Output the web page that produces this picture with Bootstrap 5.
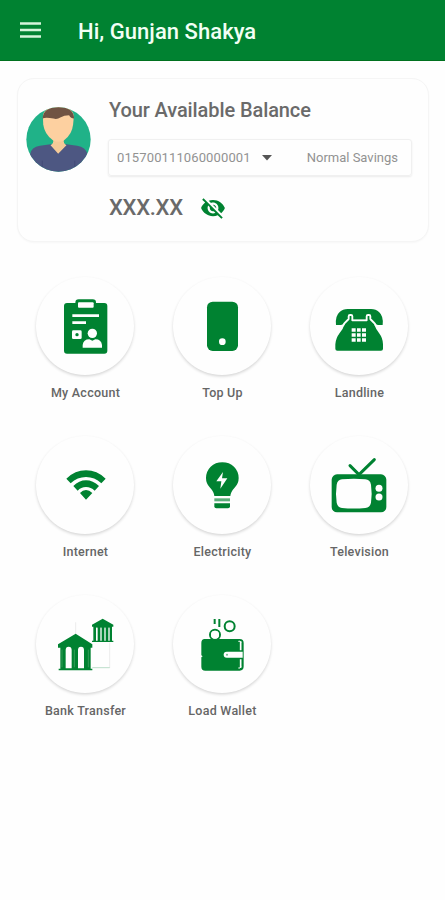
<!DOCTYPE html>
<html lang="en">
<head>
<meta charset="utf-8">
<meta name="viewport" content="width=device-width, initial-scale=1">
<title>Mobile Banking</title>
<link href="https://cdn.jsdelivr.net/npm/bootstrap@5.3.0/dist/css/bootstrap.min.css" rel="stylesheet">
<style>
:root { --brand: #008231; }
body { font-family: Roboto, "Liberation Sans", sans-serif; background: #fefefe; color: #666; }
.topbar { background: var(--brand); height: 61px; border-bottom: 1px solid #00711f; padding: 0 19px; }
.topbar h1 { font-size: 22px; font-weight: 500; line-height: 26px; margin: 3px 0 0 35px; letter-spacing: .04px; color: #f2fff5; }
.balance { margin: 17px 16px 0 17px; height: 164px; border: 1px solid #f5f5f5; border-radius: 17px; background: #fefefe; box-shadow: 0 1px 2px rgba(0,0,0,.03); padding: 17px 16px 0 8px; }
.avatar { width: 65px; height: 65px; margin-top: 11px; }
.details { margin-left: 17px; }
.balance h2 { font-size: 20px; font-weight: 500; line-height: 28px; margin: 0 0 15px 1px; letter-spacing: -.1px; color: #6a6a6a; }
.account { height: 37px; border: 1px solid #f0f0f0; border-radius: 3px; box-shadow: 0 1px 2px rgba(0,0,0,.08); font-size: 13px; color: #929292; padding: 0 13px 0 8px; }
.account .number { letter-spacing: .12px; }
.money { margin-top: 18px; }
.amount { font-size: 22px; font-weight: 500; line-height: 28px; color: #6a6a6a; margin-left: 1px; letter-spacing: -.3px; }
.hide-eye { margin-left: 17px; }
.services { padding: 35px 17px 0; }
.services .tile { height: 159px; }
.disc { width: 98px; height: 98px; background: #fefefe; box-shadow: 0 1.5px 3px rgba(0,0,0,.16); }
.disc svg { display: block; width: 98px; height: 98px; }
.tile-label { font-size: 12.5px; font-weight: 500; line-height: 16px; margin-top: 10px; letter-spacing: .25px; }
.g { fill: var(--brand); }
.w { fill: #fefefe; }
.s { fill: none; stroke: var(--brand); }
</style>
<script src="https://cdn.jsdelivr.net/npm/bootstrap@5.3.0/dist/js/bootstrap.bundle.min.js"></script>
</head>
<body>
<header class="topbar d-flex align-items-center">
  <svg width="24" height="24" viewBox="0 0 24 24"><path d="M1 5.500h21M1 12h21M1 18.500h21" stroke="#d5f5da" stroke-width="2.300"/></svg>
  <h1>Hi, Gunjan Shakya</h1>
</header>
<main>
  <section class="balance d-flex">
    <svg class="avatar flex-shrink-0" viewBox="32 35 196 196">
      <clipPath id="face"><circle cx="130" cy="133" r="97"/></clipPath>
      <g clip-path="url(#face)">
        <rect x="30" y="30" width="200" height="205" fill="#20b288"/>
        <path d="M44 235V178q4-22 30-26l32-5h48l32 5q26 4 32 26v57z" fill="#4d5782"/>
        <path d="M106 150q10-4 8-16h32q-2 12 8 16l-25 26z" fill="#f5ca98"/>
        <path d="M83 66Q83 35 130 35t46 31l-2 22q-3 30-27 47-17 10-34 0-25-17-29-47z" fill="#fdd0a0"/>
        <path d="M82 70Q84 35 130 35t47 35q-10 0-15-10-16 0-25 6-12 8-22 4-25-5-33 0z" fill="#705343"/>
        <path d="M81 235v-38M179 235v-38" stroke="#424b76" stroke-width="3"/>
      </g>
    </svg>
    <div class="details flex-grow-1">
      <h2>Your Available Balance</h2>
      <div class="account d-flex align-items-center">
        <span class="number">015700111060000001</span>
        <svg class="ms-auto" width="10" height="6" viewBox="0 0 10 6"><path d="M0 0h10L5 5.500z" fill="#555"/></svg>
        <span class="ms-auto ps-4">Normal Savings</span>
      </div>
      <div class="money d-flex align-items-center">
        <span class="amount">XXX.XX</span>
        <svg class="hide-eye" width="26" height="26" viewBox="0 0 24 24"><path class="g" d="M12 7c2.760 0 5 2.240 5 5 0 .65-.13 1.260-.36 1.830l2.920 2.920c1.510-1.260 2.700-2.890 3.430-4.750-1.730-4.390-6-7.500-11-7.500-1.400 0-2.740.25-3.980.7l2.160 2.160C10.740 7.130 11.350 7 12 7zM2 4.270l2.280 2.280.46.460C3.080 8.300 1.780 10.020 1 12c1.730 4.390 6 7.500 11 7.500 1.550 0 3.030-.3 4.380-.84l.42.42L19.730 22 21 20.730 3.270 3 2 4.270zM7.530 9.800l1.550 1.550c-.05.21-.08.43-.08.65 0 1.660 1.340 3 3 3 .22 0 .44-.03.65-.08l1.550 1.550c-.67.33-1.410.53-2.200.53-2.760 0-5-2.240-5-5 0-.79.2-1.530.53-2.200zm4.310-.78l3.150 3.150.02-.16c0-1.660-1.340-3-3-3l-.17.01z"/></svg>
      </div>
    </div>
  </section>

  <section class="services">
    <div class="row row-cols-3 g-0 text-center">
      <div class="col tile d-flex flex-column align-items-center">
        <div class="disc rounded-circle"><svg viewBox="18 19 294 294">
          <rect class="g" x="102" y="97" width="130" height="152" rx="9"/><rect class="g" x="136" y="86" width="62" height="34" rx="10"/>
          <rect class="w" x="144" y="95" width="47" height="16" rx="3"/>
          <path d="M127 135h80M127 156h41" stroke="#fefefe" stroke-width="8"/>
          <rect class="w" x="126" y="179" width="29" height="26" rx="4"/><circle class="g" cx="141" cy="192" r="5"/>
          <circle class="w" cx="187" cy="188" r="14"/><path class="w" d="M158 231v-8q2-17 20-17l9 4 9-4q18 0 20 17v8z"/>
        </svg></div>
        <div class="tile-label">My Account</div>
      </div>
      <div class="col tile d-flex flex-column align-items-center">
        <div class="disc rounded-circle"><svg viewBox="18 19 294 294">
          <rect class="g" x="120" y="93" width="93" height="148" rx="17"/><circle class="w" cx="166" cy="213" r="10"/>
        </svg></div>
        <div class="tile-label">Top Up</div>
      </div>
      <div class="col tile d-flex flex-column align-items-center">
        <div class="disc rounded-circle"><svg viewBox="16 19 294 294">
          <path class="g" d="M94 163q-3-27 11-39 9-9 24-9h70q15 0 24 9 14 12 11 39h-24l-10-16H128l-12 16z"/>
          <path class="g" d="M92 234v-13q1-18 13-34 11-13 15-27l12-13v-10h9v12h46v-12h9v10l12 13q5 14 15 27 12 16 12 34v13q0 6-6 6H98q-6 0-6-6z"/>
          <path d="M109 166q7 0 10-8l13-13v-8q0-4 4-4h3q4 0 4 4v12h43v-12q0-4 4-4h3q4 0 4 4v8l13 13q3 8 10 8" fill="none" stroke="#fefefe" stroke-width="5.500" stroke-linejoin="round"/>
          <path d="M141 178h12m4 0h11m4 0h12M141 193h12m4 0h11m4 0h12M141 208h12m4 0h11m4 0h12" stroke="#fefefe" stroke-width="11"/>
        </svg></div>
        <div class="tile-label">Landline</div>
      </div>
      <div class="col tile d-flex flex-column align-items-center">
        <div class="disc rounded-circle"><svg viewBox="18 17 294 294">
          <path class="g" d="M109 145q26-25 59-25t59 25l-13 14q-20-19-46-19t-46 19zM130 167q17-17 38-17t39 17l-13 14q-11-11-26-11t-25 11zM150 188q8-9 18-9t19 9l-19 20z"/>
        </svg></div>
        <div class="tile-label">Internet</div>
      </div>
      <div class="col tile d-flex flex-column align-items-center">
        <div class="disc rounded-circle"><svg viewBox="18 17 294 294">
          <path class="g" d="M142 197q-1-12-14-26-11-12-11-28 0-20 14-34 14-13 35-13t35 13q14 14 14 34 0 16-11 28-13 14-14 26z"/>
          <path class="g" opacity=".65" d="M142 204h47v9h-47z"/><path class="g" d="M142 219h47v9q0 6-6 6h-35q-6 0-6-6z"/>
          <path class="w" d="M168 125l-20 28h15l-3 22 21-31h-16z"/>
        </svg></div>
        <div class="tile-label">Electricity</div>
      </div>
      <div class="col tile d-flex flex-column align-items-center">
        <div class="disc rounded-circle"><svg viewBox="16 17 294 294">
          <path class="s" d="M136 106l27 27 46-45" stroke-width="9" stroke-linecap="round"/>
          <rect class="g" x="81" y="132" width="164" height="114" rx="16"/>
          <path class="w" d="M112 147q36-3 70 0 14 1 17 16 4 27 0 54-3 14-17 16-35 3-70 0-13-2-16-16-4-27 0-54 3-15 16-16z"/>
          <circle class="w" cx="223" cy="174" r="10.500"/><circle class="w" cx="223" cy="200" r="10.500"/>
        </svg></div>
        <div class="tile-label">Television</div>
      </div>
      <div class="col tile d-flex flex-column align-items-center">
        <div class="disc rounded-circle"><svg viewBox="18 14 294 294">
          <path d="M137 96v36M239 157v76" stroke="#e3e3e3" stroke-width="2"/><path d="M187 232h52" stroke="#9ccdb0" stroke-width="2"/>
          <path class="g" d="M84 162l53-32 50 32v10H84zM91 170h91v65h5v5H86v-5h5z"/>
          <path class="w" d="M107 234v-55q0-10 9-10t9 10v55zM144 234v-55q0-10 9-10t9 10v55z"/>
          <path d="M96 178v53M133 178v53M175 178v53" stroke="#4da66c" stroke-width="2"/>
          <path class="g" d="M186 103l32-18 32 18v6h-64zM190 109h56v42h4v4h-64v-4h4z"/>
          <path class="w" d="M198 151v-37q3-6 5 0v37zM211 151v-37q2-6 4 0v37zM223 151v-37q2-6 4 0v37zM235 151v-37q2-6 4 0v37z"/>
        </svg></div>
        <div class="tile-label">Bank Transfer</div>
      </div>
      <div class="col tile d-flex flex-column align-items-center">
        <div class="disc rounded-circle"><svg viewBox="18 14 294 294">
          <path class="s" d="M143 86v15M157 86v24" stroke-width="6"/>
          <circle class="s" cx="188" cy="108" r="15" stroke-width="6"/>
          <path class="g" d="M113 146h105q12 0 12 12v70q0 13-12 13H115q-12 0-12-12v-28l4-3-4-3v-37q0-12 10-12z"/>
          <circle class="s" cx="144" cy="133" r="15" stroke-width="6"/><circle class="w" cx="144" cy="133" r="12"/>
          <path d="M221 153v27M221 207v25" stroke="#fefefe" stroke-width="5"/><path d="M214 153q6-3 8 4M214 233q6 2 8-4" fill="none" stroke="#fefefe" stroke-width="3"/>
          <path class="w" d="M227 184h-48q-9 0-9 9t9 9h48z"/><circle cx="180" cy="193" r="3" fill="#72b78a"/>
        </svg></div>
        <div class="tile-label">Load Wallet</div>
      </div>
    </div>
  </section>
</main>
</body>
</html>
